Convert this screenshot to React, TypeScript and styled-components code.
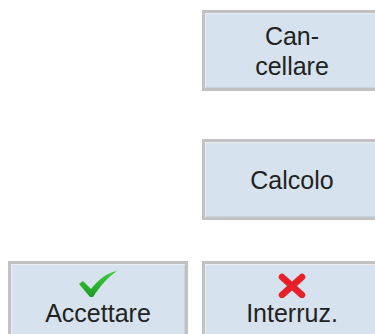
import styled, { createGlobalStyle } from "styled-components";

const GlobalStyle = createGlobalStyle`
  html, body {
    margin: 0;
    padding: 0;
    background: #ffffff;
  }
`;

const Screen = styled.div`
  width: 375px;
  height: 334px;
  overflow: hidden;
  display: flex;
  flex-direction: column;
  padding: 10px 0 0 8px;
  box-sizing: border-box;
`;

const Row = styled.div<{ $gap: number }>`
  display: grid;
  grid-template-columns: 180px 180px;
  column-gap: 14px;
  margin-bottom: ${(p) => p.$gap}px;
`;

const SoftKey = styled.button<{ $col?: number; $top?: boolean }>`
  grid-column: ${(p) => p.$col ?? 1};
  height: 81px;
  box-sizing: border-box;
  border: 3px solid #c2c2c2;
  box-shadow: inset 1px 1px 0 #e9eff5, inset -1px -1px 0 #c9d5e0;
  background: #d6e2ed;
  padding: ${(p) => (p.$top ? "6px 0 0" : "0")};
  display: flex;
  flex-direction: column;
  align-items: center;
  justify-content: ${(p) => (p.$top ? "flex-start" : "center")};
  font-family: "Liberation Sans", Arial, sans-serif;
  font-size: 25px;
  line-height: 30px;
  color: #222222;
  cursor: pointer;
`;

const Label = styled.span`
  display: block;
  text-align: center;
`;

const IconBox = styled.svg`
  display: block;
  flex-shrink: 0;
`;

const CheckIcon = () => (
  <IconBox width="40" height="28" viewBox="0 0 40 28">
    <defs>
      <linearGradient id="ck" x1="0" y1="0" x2="0" y2="1">
        <stop offset="0" stopColor="#3fcf3f" />
        <stop offset="1" stopColor="#1b9a23" />
      </linearGradient>
    </defs>
    <path
      d="M1 14 L5 11 L13 19 C20 10 28 3 39 1 C30 7 22 16 15 27 L12 27 Z"
      fill="url(#ck)"
    />
  </IconBox>
);

const CrossIcon = () => (
  <IconBox width="28" height="28" viewBox="0 0 28 28">
    <g stroke="#e8202a" strokeWidth="6.5" strokeLinecap="round">
      <line x1="4" y1="7" x2="24" y2="25" />
      <line x1="24" y1="7" x2="4" y2="25" />
    </g>
  </IconBox>
);

export default function App() {
  return (
    <>
      <GlobalStyle />
      <Screen>
        <Row $gap={48}>
          <SoftKey $col={2}>
            <Label>Can-</Label>
            <Label>cellare</Label>
          </SoftKey>
        </Row>
        <Row $gap={41}>
          <SoftKey $col={2}>
            <Label>Calcolo</Label>
          </SoftKey>
        </Row>
        <Row $gap={0}>
          <SoftKey $col={1} $top>
            <CheckIcon />
            <Label>Accettare</Label>
          </SoftKey>
          <SoftKey $col={2} $top>
            <CrossIcon />
            <Label>Interruz.</Label>
          </SoftKey>
        </Row>
      </Screen>
    </>
  );
}
